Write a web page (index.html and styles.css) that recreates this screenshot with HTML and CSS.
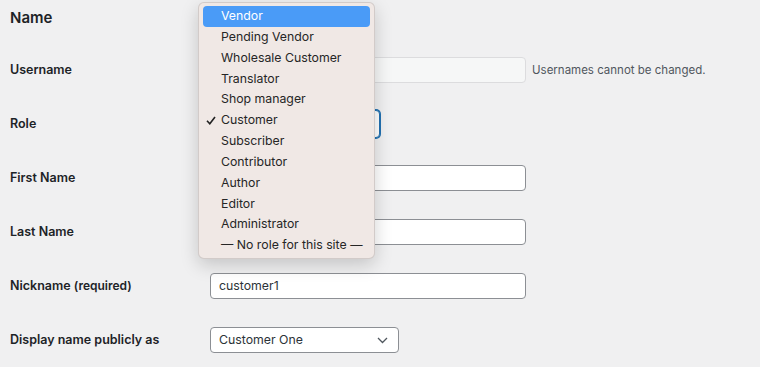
FILE: index.html
```html
<!DOCTYPE html>
<html>
	<head>
		<meta charset="UTF-8">
		<title>Edit User</title>
		<link rel="stylesheet" href="styles.css">
	</head>
	<body>
		<div class="user-form">
			<h2 class="section-title">Name</h2>

			<div class="form-row">
				<div class="row-label">Username</div>
				<div class="field">
					<div class="text-input is-disabled"></div>
					<span class="hint">Usernames cannot be changed.</span>
				</div>
			</div>

			<div class="form-row">
				<div class="row-label">Role</div>
				<div class="field">
					<!-- its value is hidden under the open menu -->
					<div class="select-box role-select is-focused"></div>
				</div>
			</div>

			<div class="form-row">
				<div class="row-label">First Name</div>
				<div class="field"><div class="text-input"></div></div>
			</div>

			<div class="form-row">
				<div class="row-label">Last Name</div>
				<div class="field"><div class="text-input"></div></div>
			</div>

			<div class="form-row">
				<div class="row-label">Nickname <span class="small">(required)</span></div>
				<div class="field"><div class="text-input">customer1</div></div>
			</div>

			<div class="form-row">
				<div class="row-label">Display name publicly as</div>
				<div class="field">
					<div class="select-box display-select">
						<span>Customer One</span>
						<svg class="chevron" width="11" height="7" viewBox="0 0 11 7"><path d="M1 1l4.5 4.5L10 1" fill="none" stroke="#50575e" stroke-width="1.3"/></svg>
					</div>
				</div>
			</div>
		</div>

		<!-- open menu of the Role select -->
		<ul class="role-menu">
			<li class="active">Vendor</li>
			<li>Pending Vendor</li>
			<li>Wholesale Customer</li>
			<li>Translator</li>
			<li>Shop manager</li>
			<li class="checked"><svg class="check" width="10" height="9" viewBox="0 0 10 9"><path d="M1 4.8l2.8 3L9 1" fill="none" stroke="#222" stroke-width="1.6"/></svg>Customer</li>
			<li>Subscriber</li>
			<li>Contributor</li>
			<li>Author</li>
			<li>Editor</li>
			<li>Administrator</li>
			<li>— No role for this site —</li>
		</ul>
	</body>
</html>
```

FILE: styles.css
```css
* {
	margin: 0;
	padding: 0;
	box-sizing: border-box;
	list-style-type: none;
}

body {
	background: #f0f0f1;
	color: #1d2327;
	font: 12.3px/1.4 Inter, "Liberation Sans", sans-serif;
}

.user-form {
	width: 760px;
}

.section-title {
	height: 43px;
	line-height: 36px;
	padding-left: 10px;
	font-size: 15px;
	font-weight: 600;
}

.form-row {
	display: flex;
	align-items: center;
	height: 54px;
}

.row-label {
	width: 210px;
	padding-left: 10px;
	font-size: 12.5px;
	font-weight: 600;
}

.row-label .small {
	font-size: 12px;
}

.field {
	display: flex;
	align-items: center;
}

.text-input {
	width: 316px;
	height: 26px;
	line-height: 24px;
	padding: 0 8px;
	background: #fff;
	border: 1px solid #8c8f94;
	border-radius: 4px;
	color: #2c3338;
}

.text-input.is-disabled {
	background: #f6f7f7;
	border-color: #dcdcde;
}

.hint {
	margin-left: 6px;
	font-size: 11.5px;
	color: #50575e;
}

.select-box {
	height: 26px;
	line-height: 24px;
	padding: 0 8px;
	background: #fff;
	border: 1px solid #8c8f94;
	border-radius: 4px;
	color: #2c3338;
}

.role-select {
	width: 170px;
	height: 28px;
}

.is-focused {
	border-color: #2271b1;
	box-shadow: 0 0 0 1px #2271b1;
}

.display-select {
	display: flex;
	justify-content: space-between;
	align-items: center;
	width: 189px;
	padding-right: 10px;
}

/* native menu opened over the form */
.role-menu {
	position: absolute;
	left: 198px;
	top: 2px;
	width: 177px;
	height: 257px;
	padding: 3px 4px;
	background: #f0e8e5;
	border: 1px solid rgba(0, 0, 0, 0.12);
	border-radius: 6px;
	box-shadow: 0 6px 18px rgba(0, 0, 0, 0.18);
}

.role-menu li {
	position: relative;
	height: 20.85px;
	line-height: 20.85px;
	padding-left: 18px;
	border-radius: 4px;
	white-space: nowrap;
	color: #262626;
}

.role-menu li.active {
	background: #4a9bf7;
	color: #fff;
}

.role-menu .check {
	position: absolute;
	left: 3px;
	top: 6px;
}
```
